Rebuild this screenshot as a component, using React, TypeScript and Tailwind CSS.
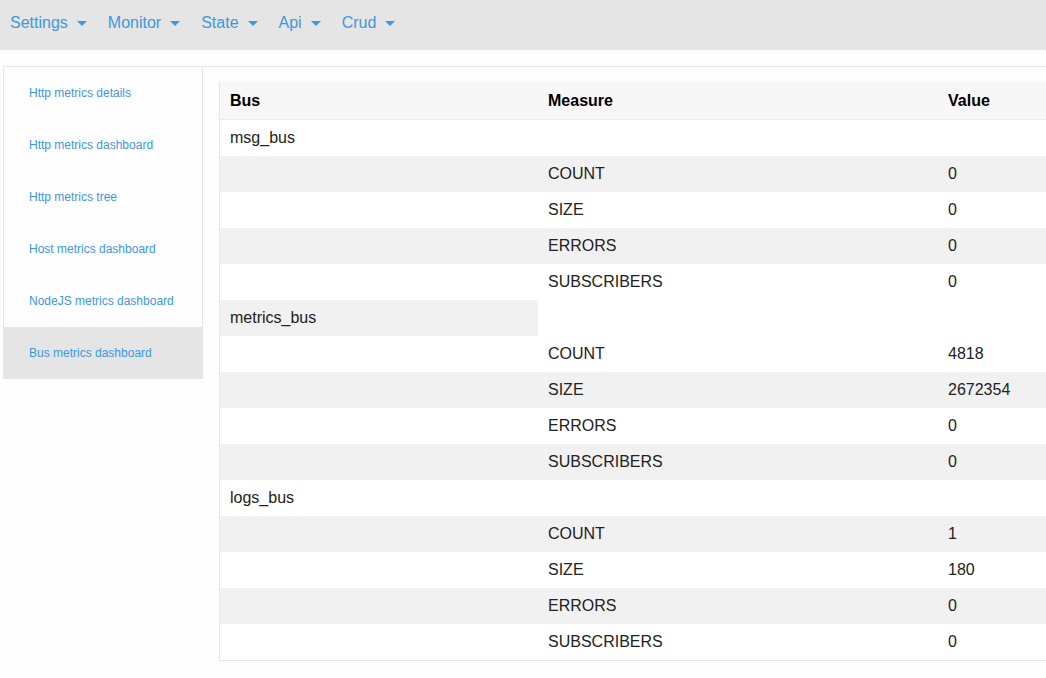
import React from 'react'

const NAV_ITEMS = ['Settings', 'Monitor', 'State', 'Api', 'Crud']

const SIDEBAR_ITEMS = [
  'Http metrics details',
  'Http metrics dashboard',
  'Http metrics tree',
  'Host metrics dashboard',
  'NodeJS metrics dashboard',
  'Bus metrics dashboard',
]

const BUSES = [
  { name: 'msg_bus', values: { COUNT: '0', SIZE: '0', ERRORS: '0', SUBSCRIBERS: '0' } },
  { name: 'metrics_bus', values: { COUNT: '4818', SIZE: '2672354', ERRORS: '0', SUBSCRIBERS: '0' } },
  { name: 'logs_bus', values: { COUNT: '1', SIZE: '180', ERRORS: '0', SUBSCRIBERS: '0' } },
]

const MEASURES = ['COUNT', 'SIZE', 'ERRORS', 'SUBSCRIBERS'] as const

export default function App() {
  // flatten into rows so striping follows the row index
  const rows: { kind: 'bus' | 'measure'; label: string; value?: string }[] = []
  BUSES.forEach((bus) => {
    rows.push({ kind: 'bus', label: bus.name })
    MEASURES.forEach((m) => rows.push({ kind: 'measure', label: m, value: bus.values[m] }))
  })

  return (
    <div
      className="min-h-screen w-[1046px] overflow-hidden bg-[#fdfdfd]"
      style={{ fontFamily: '"Liberation Sans", Arial, sans-serif' }}
    >
      {/* Top nav */}
      <nav className="h-[50px] pb-[4px] bg-[#e5e5e5] flex items-center">
        {NAV_ITEMS.map((item) => (
          <div key={item} className="flex items-center pl-[10px] pr-[11px] text-[16px] text-[#3d98e0] cursor-pointer">
            <span>{item}</span>
            <span className="ml-[9px] mt-[1px] w-0 h-0 border-l-[5px] border-r-[5px] border-t-[5px] border-l-transparent border-r-transparent border-t-[#3d98e0]" />
          </div>
        ))}
      </nav>

      <div className="mt-[16px] ml-[3px] border-t border-[#e6e6e6] flex items-start">
        {/* Sidebar */}
        <div className="w-[200px] shrink-0 border-l border-r border-[#e6e6e6]">
          {SIDEBAR_ITEMS.map((item, i) => {
            const active = i === SIDEBAR_ITEMS.length - 1
            return (
              <div
                key={item}
                className={`h-[52px] flex items-center pl-[25px] text-[12px] text-[#3d98e0] ${active ? 'bg-[#e5e5e5] -ml-px w-[200px] pl-[26px]' : ''}`}
              >
                {item}
              </div>
            )
          })}
        </div>

        {/* Main */}
        <div className="pl-[16px] pt-[15px] shrink-0">
          <div className="w-[1000px] border-l border-b border-[#e6e6e6] text-[16px] text-[#222]">
            <div className="flex h-[38px] items-center bg-[#f7f7f7] border-b border-[#ececec] font-bold text-black">
              <div className="w-[318px] pl-[10px]">Bus</div>
              <div className="w-[400px] pl-[10px]">Measure</div>
              <div className="flex-1 pl-[10px]">Value</div>
            </div>
            {rows.map((row, i) => {
              const striped = i % 2 === 1
              if (row.kind === 'bus') {
                return (
                  <div key={`${row.label}-${i}`} className="flex h-[36px] bg-white">
                    <div className={`w-[318px] pl-[10px] flex items-center ${striped ? 'bg-[#f1f1f1]' : ''}`}>{row.label}</div>
                  </div>
                )
              }
              return (
                <div key={`${row.label}-${i}`} className={`flex h-[36px] items-center ${striped ? 'bg-[#f1f1f1]' : 'bg-white'}`}>
                  <div className="w-[318px]" />
                  <div className="w-[400px] pl-[10px]">{row.label}</div>
                  <div className="flex-1 pl-[10px]">{row.value}</div>
                </div>
              )
            })}
          </div>
        </div>
      </div>
    </div>
  )
}
